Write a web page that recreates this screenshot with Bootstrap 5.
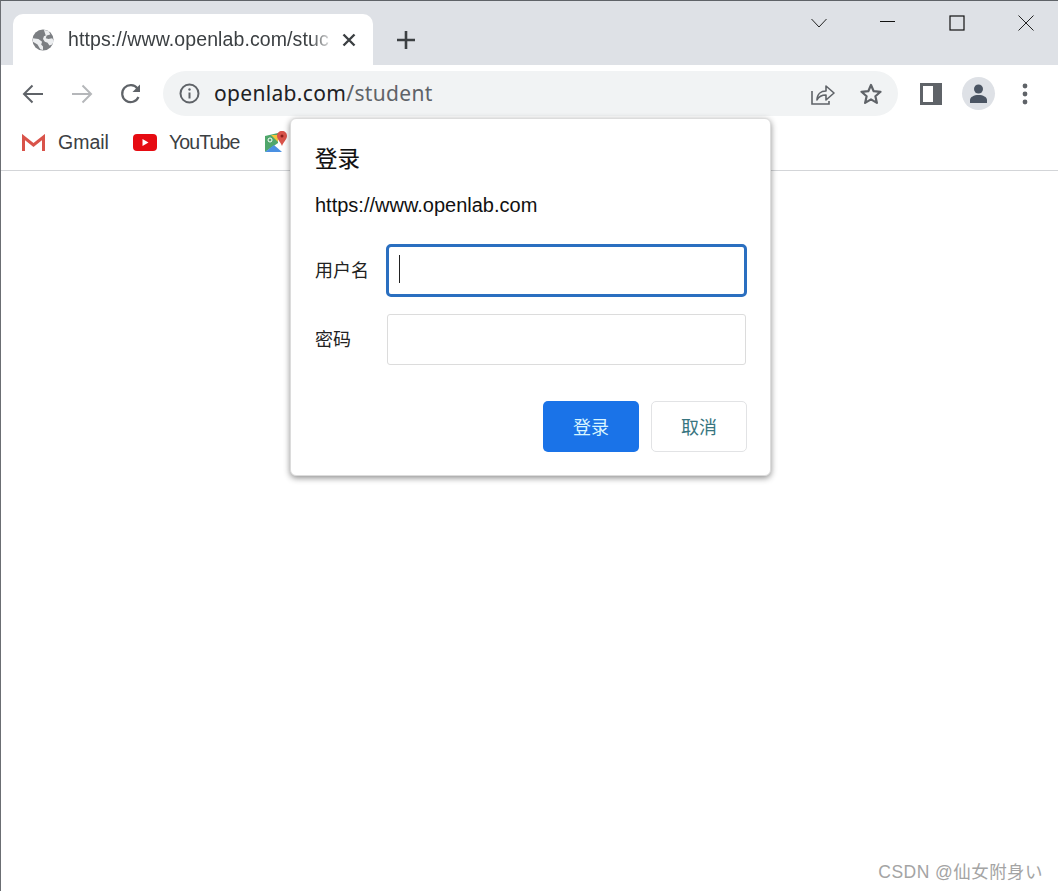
<!DOCTYPE html>
<html lang="zh">
<head>
<meta charset="utf-8">
<title>登录</title>
<link href="https://cdn.jsdelivr.net/npm/bootstrap@5.3.0/dist/css/bootstrap.min.css" rel="stylesheet">
<style>
html,body{height:100%;}
body{font-family:"Liberation Sans","Noto Sans CJK SC",sans-serif;background:#fff;color:#202124;margin:0;overflow:hidden;}
.shell{position:relative;width:1058px;height:891px;border-top:1px solid #5f6368;border-left:1px solid #6b6e73;overflow:hidden;}
.tabstrip{height:64px;background:#dee1e6;padding-left:12px;}
.tabitem{width:360px;height:51px;margin-top:13px;background:#fff;border-radius:10px 10px 0 0;padding:0 17px 0 19px;}
.tabtext{margin-left:14px;font-size:19.5px;letter-spacing:.1px;color:#3c4043;white-space:nowrap;-webkit-mask-image:linear-gradient(90deg,#000 93%,rgba(0,0,0,.2));mask-image:linear-gradient(90deg,#000 93%,rgba(0,0,0,.2));}
.plusbtn{margin-left:23px;margin-top:13px;}
.winctl{margin-left:auto;padding:0 24px 20px 0;height:64px;}
.ctlgap{margin-left:53px;}
.toolrow{height:55px;padding:6px 0 4px 21px;background:#fff;}
.navset{gap:27px;width:141px;}
.omni{width:735px;height:45px;background:#f1f3f4;border-radius:23px;padding:0 16px 0 16px;}
.urltext{margin-left:14px;font-family:"Noto Sans","Liberation Sans",sans-serif;font-size:21px;letter-spacing:.33px;color:#202124;line-height:1;}
.urlmuted{color:#5f6368;}
.omniright{margin-left:auto;gap:25px;}
.toolright{gap:20px;margin-left:22px;}
.avatar{width:33px;height:33px;border-radius:50%;background:#dee1e6;}
.dotsicon{margin-left:6px;}
.bmrow{height:51px;border-bottom:1px solid #d3d5d8;padding:0 0 5px 20px;gap:24px;}
.bmitem{gap:12px;font-size:19.5px;color:#3c4043;line-height:1;}
.yttext{letter-spacing:-.85px;}
.logindlg{position:absolute;left:289px;top:117px;width:481px;height:358px;background:#fff;border:1px solid #dcdcdc;border-radius:6px;box-shadow:0 2px 6px rgba(0,0,0,.45);padding:27px 23px 24px 24px;}
.dlgtitle{font-size:22.5px;line-height:28px;color:#111;margin:0 0 19px;font-weight:400;-webkit-text-stroke:.15px #111;}
.dlgurl{font-size:20px;line-height:24px;color:#111;margin:0 0 27px;}
.fieldrow{margin-bottom:17px;}
.fieldlabel{width:71px;font-size:18px;color:#222;margin:0;flex:none;padding-top:2px;}
.pwinput.form-control,.pwinput.form-control:focus{flex:none;width:359px;height:51px;margin-left:1px;border:1px solid #dcdcdc;border-radius:3px;box-shadow:none;background:#fff;}
.nameinput{position:relative;flex:none;width:361px;height:53px;border:3px solid #2a6fc0;border-radius:5px;background:#fff;}
.caretbar{position:absolute;left:10px;top:8px;width:1px;height:28px;background:#222;}
.dlgactions{gap:12px;margin-top:19px;}
.okbtn.btn{width:96px;height:51px;background:#1a73e8;border:0;border-radius:5px;color:#d8f5ff;font-size:18px;padding:3px 0 0;}
.nobtn.btn{width:96px;height:51px;background:#fff;border:1px solid #e2e3e5;border-radius:5px;color:#37757f;font-size:18px;padding:3px 0 0;}
.wmark{position:absolute;right:15px;bottom:10px;font-size:17.5px;color:#a4a4a4;line-height:1;letter-spacing:.45px;}
</style>
</head>
<body>
<div class="shell">
  <div class="tabstrip d-flex">
    <div class="tabitem d-flex align-items-center">
      <svg width="22" height="22" viewBox="0 0 24 24"><circle cx="12" cy="12" r="11.500" fill="#7b7e82"/><path d="M1 10l6 1 4 3-1 3 2 2v4l-3-1-3-5-5-3zM13 1l5 1 2 4-4 1-1 3 3 1 4-1 2 3-2 4-3 1-2-3-3-1-2-3 1-3 2-1z" fill="#eceef0"/></svg>
      <div class="tabtext">https://www.openlab.com/stuc</div>
      <svg class="ms-auto" width="14" height="14" viewBox="0 0 14 14"><path d="M1.500 1.500l11 11M12.500 1.500l-11 11" stroke="#3c4043" stroke-width="2.400"/></svg>
    </div>
    <svg class="plusbtn align-self-center" width="20" height="20" viewBox="0 0 20 20"><path d="M10 1v18M1 10h18" stroke="#3c4043" stroke-width="2.600"/></svg>
    <div class="winctl d-flex align-items-center">
      <svg width="16" height="16" viewBox="0 0 16 16"><path d="M.5 4l7.500 8 7.500-8" fill="none" stroke="#222" stroke-width="1"/></svg>
      <svg class="ctlgap" width="16" height="16" viewBox="0 0 16 16"><path d="M0 6.500h15" stroke="#111" stroke-width="1"/></svg>
      <svg class="ctlgap" width="16" height="16" viewBox="0 0 16 16"><rect x="1" y="1" width="14" height="14" fill="none" stroke="#111" stroke-width="1.200"/></svg>
      <svg class="ctlgap" width="16" height="16" viewBox="0 0 16 16"><path d="M.5.500l15 15M15.500.500l-15 15" stroke="#222" stroke-width="1"/></svg>
    </div>
  </div>
  <div class="toolrow d-flex align-items-center">
    <div class="navset d-flex align-items-center">
      <svg width="22" height="20" viewBox="0 0 22 20"><path d="M21 10H2M10.500 1.500L2 10l8.500 8.500" fill="none" stroke="#5f6368" stroke-width="2"/></svg>
      <svg width="22" height="20" viewBox="0 0 22 20"><path d="M1 10h19M11.500 1.500L20 10l-8.500 8.500" fill="none" stroke="#b5b7ba" stroke-width="2"/></svg>
      <svg width="22" height="22" viewBox="0 0 22 22"><path d="M18.500 14a8.500 8.500 0 1 1-1-8.500" fill="none" stroke="#5f6368" stroke-width="2.200"/><path d="M20 1.500v7.500h-7.500z" fill="#5f6368"/></svg>
    </div>
    <div class="omni d-flex align-items-center">
      <svg width="21" height="21" viewBox="0 0 21 21"><circle cx="10.500" cy="10.500" r="9" fill="none" stroke="#5f6368" stroke-width="2"/><path d="M10.500 9.500v6" stroke="#5f6368" stroke-width="2"/><circle cx="10.500" cy="6.500" r="1.200" fill="#5f6368"/></svg>
      <span class="urltext">openlab.com<span class="urlmuted">/student</span></span>
      <div class="omniright d-flex align-items-center">
        <svg width="24" height="23" viewBox="0 0 24 23"><path d="M1 9v13h17v-3" fill="none" stroke="#5f6368" stroke-width="1.600"/><path d="M6 18c0-6 4-9 9-9V4l8 7-8 7v-5c-4 0-7 1-9 5z" fill="none" stroke="#5f6368" stroke-width="1.600" stroke-linejoin="round"/></svg>
        <svg width="22" height="22" viewBox="0 0 22 22"><path d="M11 2l2.700 6.200 6.800.6-5.100 4.500 1.500 6.600L11 16.400l-5.900 3.500 1.500-6.600L1.500 8.800l6.800-.6z" fill="none" stroke="#5f6368" stroke-width="2.200" stroke-linejoin="round"/></svg>
      </div>
    </div>
    <div class="toolright d-flex align-items-center">
      <svg width="22" height="22" viewBox="0 0 22 22"><rect x="1.500" y="1.500" width="19" height="19" fill="none" stroke="#5f6368" stroke-width="3"/><rect x="13" y="2" width="7" height="18" fill="#5f6368"/></svg>
      <div class="avatar d-flex align-items-center justify-content-center">
        <svg width="19" height="19" viewBox="0 0 19 19"><circle cx="9.500" cy="5" r="4.500" fill="#4b5563"/><path d="M1 19v-3c0-3 4-5 8.500-5s8.500 2 8.500 5v3z" fill="#4b5563"/></svg>
      </div>
      <svg class="dotsicon" width="8" height="22" viewBox="0 0 8 22"><circle cx="4" cy="3" r="2.400" fill="#5f6368"/><circle cx="4" cy="11" r="2.400" fill="#5f6368"/><circle cx="4" cy="19" r="2.400" fill="#5f6368"/></svg>
    </div>
  </div>
  <div class="bmrow d-flex align-items-center">
    <div class="bmitem d-flex align-items-center">
      <svg width="25" height="18" viewBox="0 0 25 18"><path d="M2.500 17V3l10 8 10-8v14" fill="none" stroke="#d9534a" stroke-width="3"/></svg>
      <span>Gmail</span>
    </div>
    <div class="bmitem d-flex align-items-center">
      <svg width="24" height="17" viewBox="0 0 24 17"><rect width="24" height="17" rx="4" fill="#e60b12"/><path d="M9.500 5l6 3.500-6 3.500z" fill="#fff"/></svg>
      <span class="yttext">YouTube</span>
    </div>
    <svg width="24" height="24" viewBox="0 0 24 24"><path d="M1 5l13-3v10l-13 9z" fill="#4fa66b"/><path d="M1 21l9-7 8 7z" fill="#4a90e2"/><path d="M7 4h7v7z" fill="#f3c33c"/><path d="M18 0c3 0 5 2 5 5 0 3-4 7-5 10-1-3-5-7-5-10 0-3 2-5 5-5z" fill="#d9534a"/><circle cx="18" cy="5" r="1.500" fill="#8b1e1a"/><circle cx="6" cy="9" r="2" fill="none" stroke="#fff" stroke-width="1"/></svg>
  </div>

  <form class="logindlg d-flex flex-column">
    <h5 class="dlgtitle">登录</h5>
    <p class="dlgurl">https://www.openlab.com</p>
    <div class="fieldrow d-flex align-items-center">
      <label class="fieldlabel">用户名</label>
      <div class="nameinput"><span class="caretbar"></span></div>
    </div>
    <div class="fieldrow d-flex align-items-center">
      <label class="fieldlabel" for="pw">密码</label>
      <input id="pw" class="form-control pwinput" type="password">
    </div>
    <div class="dlgactions d-flex justify-content-end">
      <button type="button" class="btn okbtn">登录</button>
      <button type="button" class="btn nobtn">取消</button>
    </div>
  </form>

  <div class="wmark">CSDN @仙女附身い</div>
</div>
<script src="https://cdn.jsdelivr.net/npm/bootstrap@5.3.0/dist/js/bootstrap.bundle.min.js"></script>
</body>
</html>
